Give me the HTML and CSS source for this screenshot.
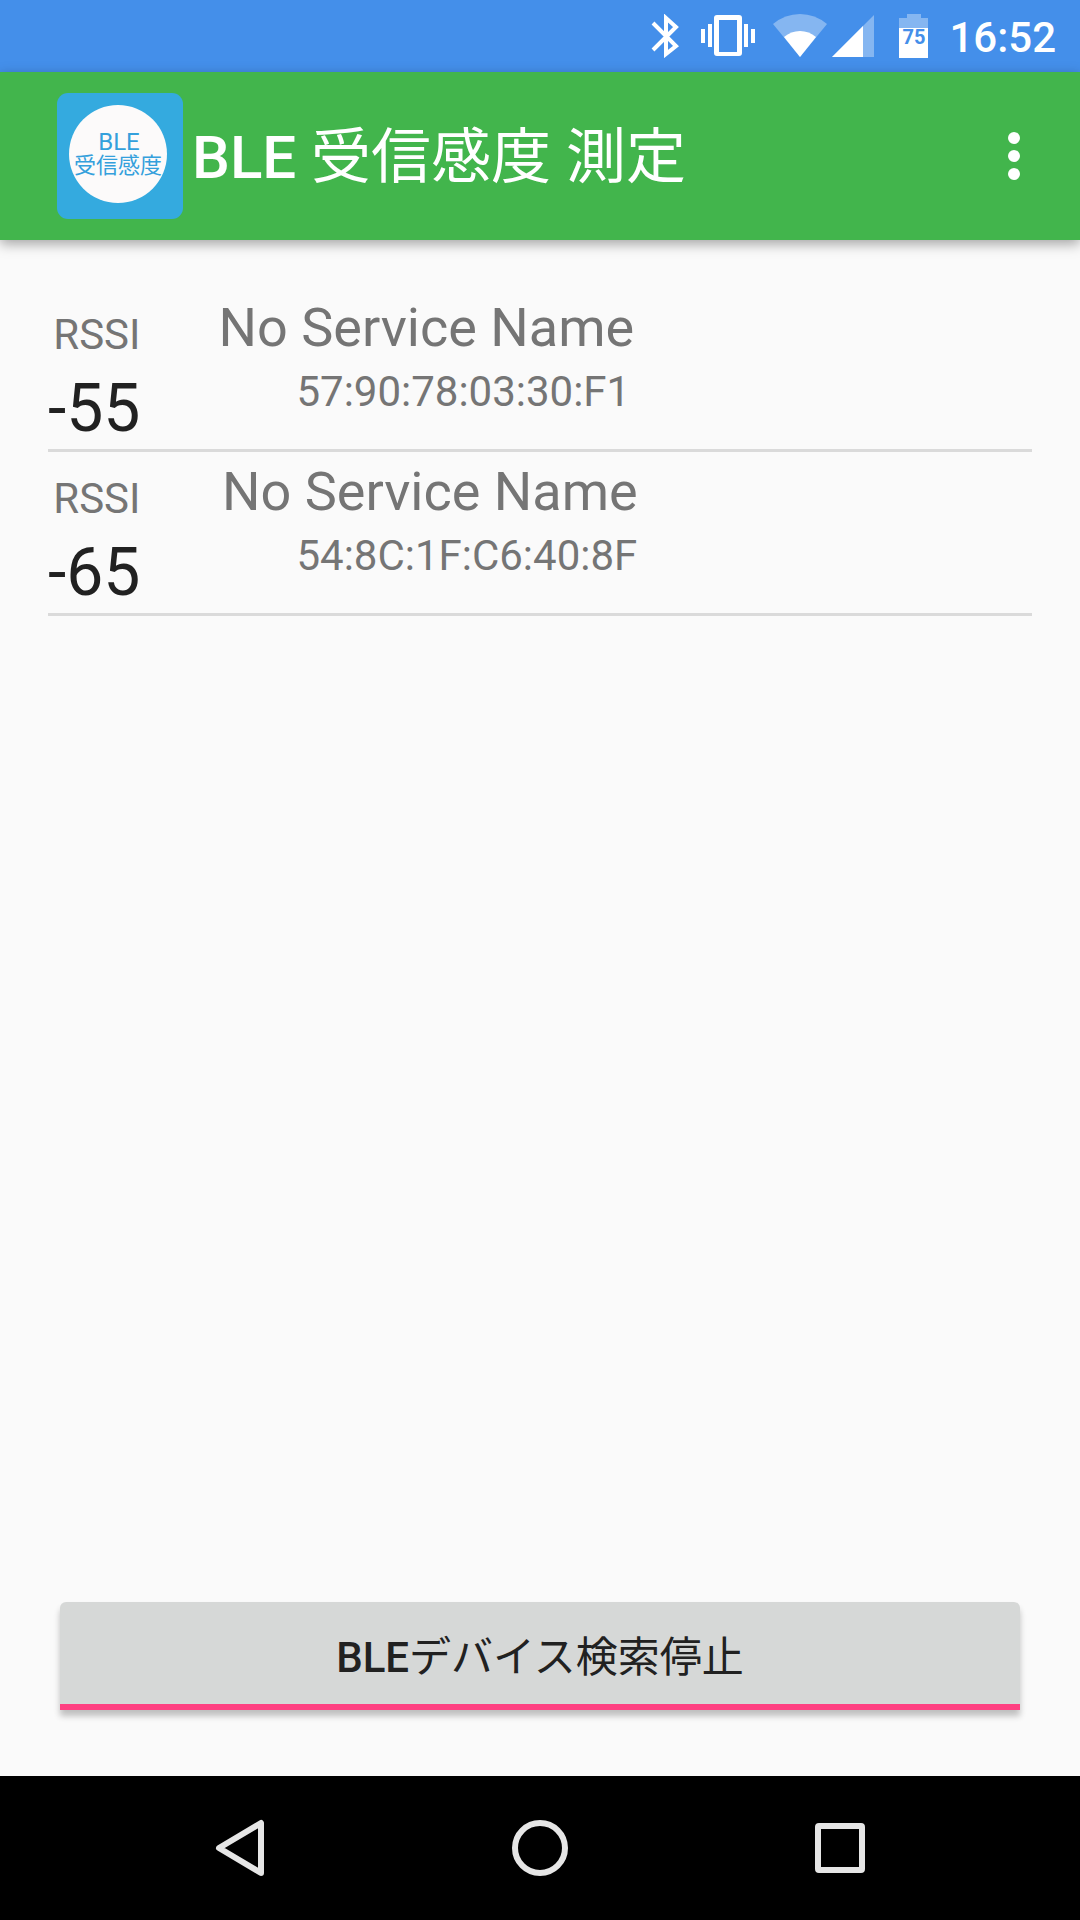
FILE: index.html
```html
<!DOCTYPE html>
<html lang="ja">
<head>
    <meta charset="utf-8">
    <meta name="viewport" content="width=device-width, initial-scale=1">
    <title>BLE 受信感度 測定</title>
    <link rel="stylesheet" href="styles.css">
</head>
<body>
    <div class="status-bar">
        <svg class="bluetooth" width="28" height="44" viewBox="0 0 28 44" fill="none" stroke="#fff" stroke-width="4">
            <path d="M2 9L25 32L15 40V4L25 13L2 36"/>
        </svg>
        <svg class="vibrate" width="56" height="44" viewBox="0 0 56 44" fill="#fff">
            <path fill-rule="evenodd" d="M17 1H39Q42 1 42 4V39Q42 42 39 42H17Q14 42 14 39V4Q14 1 17 1ZM19 6V38H37V6Z"/>
            <path d="M1 15H5V29H1ZM8 10H12V33H8ZM44 10H48V33H44ZM51 15H55V29H51Z"/>
        </svg>
        <svg class="wifi" width="54" height="44" viewBox="0 0 54 44" fill="#fff">
            <path opacity=".35" d="M0 10Q12 0 27 0T54 10L27 43Z"/>
            <path d="M11 23Q18 17 27 17T43 23L27 43Z"/>
        </svg>
        <svg class="signal" width="42" height="44" viewBox="0 0 42 44" fill="#fff">
            <path opacity=".35" d="M42 1V43H0Z"/>
            <path d="M31 12V43H0Z"/>
        </svg>
        <svg class="battery" width="30" height="44" viewBox="0 0 30 44">
            <path fill="#fff" opacity=".35" d="M8 0H22V4H29V14H0V4H8Z"/>
            <path fill="#fff" d="M0 14H29V44H0Z"/>
            <text class="battery-level" x="15" y="30" text-anchor="middle">75</text>
        </svg>
        <span class="clock">16:52</span>
    </div>

    <header class="toolbar">
        <svg class="app-icon" width="126" height="126" viewBox="0 0 126 126">
            <rect width="126" height="126" rx="11" fill="#34aadf"/>
            <circle cx="61" cy="61" r="49" fill="#fcfafa"/>
            <text class="app-icon-ble" x="62" y="57" text-anchor="middle">BLE</text>
            <text class="app-icon-text" x="61" y="80" text-anchor="middle">受信感度</text>
        </svg>
        <h1 class="title">BLE <span class="kanji">受信感度 測定</span></h1>
        <button class="menu-button" type="button" aria-label="メニュー">
            <svg width="12" height="48" viewBox="0 0 12 48" fill="#fff">
                <circle cx="6" cy="6" r="6"/>
                <circle cx="6" cy="24" r="6"/>
                <circle cx="6" cy="42" r="6"/>
            </svg>
        </button>
    </header>

    <main class="content">
        <ul class="device-list">
            <li class="device">
                <div class="signal-level">
                    <span class="label">RSSI</span>
                    <span class="rssi">-55</span>
                </div>
                <div class="device-info">
                    <span class="name">No Service Name</span>
                    <span class="address">57:90:78:03:30:F1</span>
                </div>
            </li>
            <li class="device">
                <div class="signal-level">
                    <span class="label">RSSI</span>
                    <span class="rssi">-65</span>
                </div>
                <div class="device-info">
                    <span class="name">No Service Name</span>
                    <span class="address">54:8C:1F:C6:40:8F</span>
                </div>
            </li>
        </ul>
        <button class="scan-button" type="button">BLE<span class="kanji">デバイス検索停止</span></button>
    </main>

    <nav class="nav-bar">
        <button class="nav-button" type="button" aria-label="戻る">
            <svg width="60" height="60" viewBox="0 0 60 60">
                <path d="M51 5V55L9 30Z"/>
            </svg>
        </button>
        <button class="nav-button" type="button" aria-label="ホーム">
            <svg width="60" height="60" viewBox="0 0 60 60">
                <circle cx="30" cy="30" r="25"/>
            </svg>
        </button>
        <button class="nav-button" type="button" aria-label="履歴">
            <svg width="60" height="60" viewBox="0 0 60 60">
                <rect x="8" y="8" width="44" height="44" rx="1"/>
            </svg>
        </button>
    </nav>
</body>
</html>
```

FILE: styles.css
```css
* {
    box-sizing: border-box;
}
body {
    margin: 0;
    min-height: 100vh;
    display: flex;
    flex-direction: column;
    background-color: #fafafa;
    color: #212121;
    font-family: Roboto, "Noto Sans CJK JP", sans-serif;
}
button {
    border: none;
    padding: 0;
    background: none;
    font-family: inherit;
    cursor: pointer;
}
svg {
    display: block;
    flex-shrink: 0;
}
.kanji {
    font-weight: 400;
}

/* status bar */
.status-bar {
    display: flex;
    justify-content: flex-end;
    align-items: center;
    height: 72px;
    padding-right: 24px;
    background-color: #448fea;
    color: #fff;
}
.bluetooth {
    margin-right: 21px;
}
.vibrate {
    margin-right: 17px;
}
.wifi {
    margin-right: 5px;
}
.signal {
    margin-right: 25px;
}
.battery {
    margin-right: 20px;
}
.battery-level {
    font-size: 20px;
    font-weight: 700;
    fill: #448fea;
}
.clock {
    padding-top: 4px;
    font-size: 42px;
    font-weight: 500;
    line-height: 48px;
}

/* toolbar */
.toolbar {
    position: relative;
    display: flex;
    align-items: center;
    height: 168px;
    padding: 0 48px 0 57px;
    background-color: #42b54c;
    color: #fff;
    box-shadow: 0 4px 12px rgba(0, 0, 0, 0.35);
}
.app-icon-text {
    font-family: "Noto Sans CJK JP", sans-serif;
    font-size: 22px;
    fill: #34a0dc;
}
.app-icon-ble {
    font-size: 24px;
    fill: #34a0dc;
}
.title {
    flex: 1;
    margin: 0;
    padding: 4px 0 0 9px;
    font-size: 60px;
    font-weight: 500;
    line-height: 72px;
}
.menu-button {
    display: flex;
    justify-content: center;
    width: 36px;
}

/* device list */
.content {
    flex: 1;
    display: flex;
    flex-direction: column;
    justify-content: space-between;
    padding: 48px 48px 66px;
}
.device-list {
    margin: 0;
    padding: 0;
    list-style: none;
}
.device {
    display: flex;
    gap: 56px;
    border-bottom: 3px solid #dadada;
}
.signal-level {
    display: flex;
    flex-direction: column;
    align-items: flex-end;
    gap: 11px;
    padding: 22px 0 2px;
}
.label {
    color: #757575;
    font-size: 42px;
    line-height: 49px;
}
.rssi {
    font-size: 66px;
    line-height: 77px;
}
.device-info {
    display: flex;
    flex-direction: column;
    align-items: center;
    gap: 8px;
    padding-top: 8px;
    color: #757575;
}
.name {
    font-size: 54px;
    line-height: 63px;
}
.address {
    padding: 0 26px 0 100px;
    font-size: 42px;
    line-height: 49px;
}

/* scan button */
.scan-button {
    height: 108px;
    margin: 0 12px;
    border-bottom: 6px solid #ff4081;
    border-radius: 6px 6px 0 0;
    background-color: #d6d8d7;
    box-shadow: 0 6px 6px rgba(0, 0, 0, 0.24);
    color: #212121;
    font-size: 42px;
    font-weight: 500;
}

/* navigation bar */
.nav-bar {
    display: flex;
    height: 144px;
    padding: 0 90px;
    background-color: #000;
}
.nav-button {
    flex: 1;
    display: flex;
    justify-content: center;
    align-items: center;
}
.nav-button svg {
    fill: none;
    stroke: #e6e6e6;
    stroke-width: 6;
    stroke-linejoin: round;
}
```
